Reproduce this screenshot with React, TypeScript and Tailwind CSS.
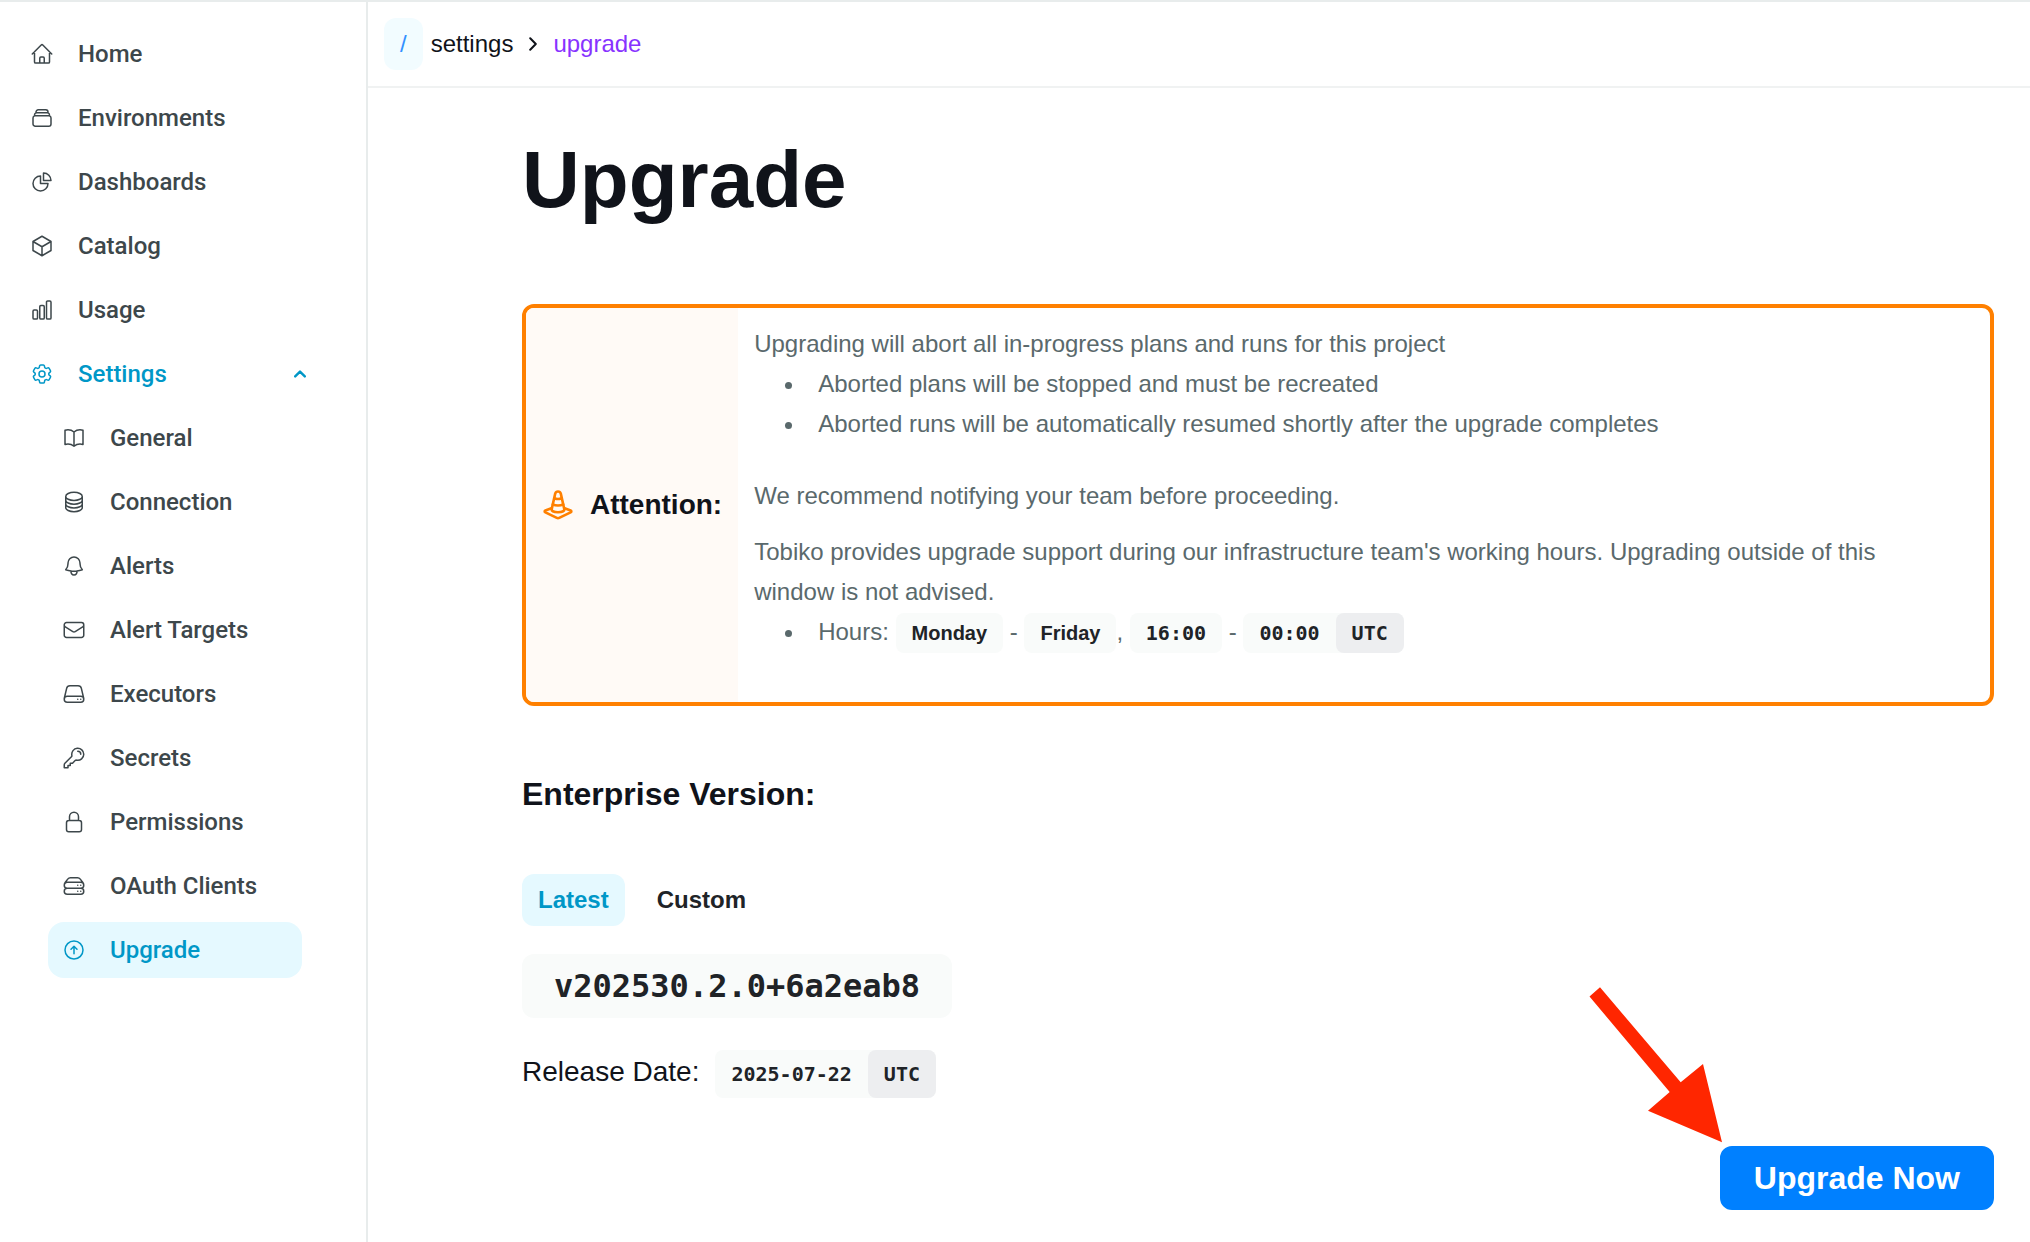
import { useState } from "react";
import type { ReactNode } from "react";
import type { IconType } from "react-icons";
import {
  HiOutlineArrowUpCircle,
  HiOutlineBell,
  HiOutlineBookOpen,
  HiOutlineChartBar,
  HiOutlineChartPie,
  HiOutlineCircleStack,
  HiOutlineCog6Tooth,
  HiOutlineCube,
  HiOutlineEnvelope,
  HiOutlineHome,
  HiOutlineKey,
  HiOutlineLockClosed,
  HiOutlineRectangleStack,
  HiOutlineServer,
  HiOutlineServerStack,
} from "react-icons/hi2";
import clsx from "clsx";

type NavEntry = { label: string; icon: IconType; active?: boolean };

const mainEntries: NavEntry[] = [
  { label: "Home", icon: HiOutlineHome },
  { label: "Environments", icon: HiOutlineRectangleStack },
  { label: "Dashboards", icon: HiOutlineChartPie },
  { label: "Catalog", icon: HiOutlineCube },
  { label: "Usage", icon: HiOutlineChartBar },
];

const settingsEntries: NavEntry[] = [
  { label: "General", icon: HiOutlineBookOpen },
  { label: "Connection", icon: HiOutlineCircleStack },
  { label: "Alerts", icon: HiOutlineBell },
  { label: "Alert Targets", icon: HiOutlineEnvelope },
  { label: "Executors", icon: HiOutlineServer },
  { label: "Secrets", icon: HiOutlineKey },
  { label: "Permissions", icon: HiOutlineLockClosed },
  { label: "OAuth Clients", icon: HiOutlineServerStack },
  { label: "Upgrade", icon: HiOutlineArrowUpCircle, active: true },
];

function NavIcon({ icon: Icon }: { icon: IconType }) {
  return (
    <span className="flex w-7 shrink-0 justify-center">
      <Icon className="size-6" strokeWidth={1.5} aria-hidden="true" />
    </span>
  );
}

function NavLink({ label, icon, active }: NavEntry) {
  return (
    <li>
      <a
        href="#"
        aria-current={active ? "page" : undefined}
        className={clsx(
          "flex h-14 items-center gap-[22px] rounded-2xl px-3",
          active ? "bg-[#e5f9ff] text-[#0097c7]" : "text-[#3d474b]",
        )}
      >
        <NavIcon icon={icon} />
        {label}
      </a>
    </li>
  );
}

function Sidebar() {
  const [open, setOpen] = useState(true);
  return (
    <nav
      aria-label="Main"
      className="w-[368px] shrink-0 border-r-2 border-[#e8ecec] py-6 pr-12 pl-4 font-[Roboto,sans-serif] text-2xl font-medium"
    >
      <ul className="flex flex-col gap-2">
        {mainEntries.map((entry) => (
          <NavLink key={entry.label} {...entry} />
        ))}
        <li>
          <button
            type="button"
            aria-expanded={open}
            onClick={() => setOpen(!open)}
            className="flex h-14 w-full items-center gap-[22px] rounded-2xl px-3 text-[#0097c7]"
          >
            <NavIcon icon={HiOutlineCog6Tooth} />
            Settings
            <svg
              viewBox="0 0 12 8"
              className={clsx("ml-auto h-2 w-3", !open && "rotate-180")}
              fill="none"
              stroke="currentColor"
              strokeWidth="2.4"
              strokeLinecap="round"
              strokeLinejoin="round"
              aria-hidden="true"
            >
              <path d="M1.2 6.4 6 1.6l4.8 4.8" />
            </svg>
          </button>
          {open && (
            <ul className="mt-2 mr-4 ml-8 flex flex-col gap-2">
              {settingsEntries.map((entry) => (
                <NavLink key={entry.label} {...entry} />
              ))}
            </ul>
          )}
        </li>
      </ul>
    </nav>
  );
}

function Breadcrumbs() {
  return (
    <header className="flex h-[86px] items-center border-b-2 border-[#f0f2f2] px-4 text-2xl text-[#10131a]">
      <a href="#" className="flex h-[52px] items-center rounded-xl bg-[#f2fcff] px-4 text-[#3391ff]">
        /
      </a>
      <a href="#" className="ml-2">
        settings
      </a>
      <svg
        viewBox="0 0 8 14"
        className="mx-4 h-3.5 w-2"
        fill="none"
        stroke="currentColor"
        strokeWidth="2"
        strokeLinecap="round"
        strokeLinejoin="round"
        aria-hidden="true"
      >
        <path d="m1.2 1.2 5.6 5.8-5.6 5.8" />
      </svg>
      <a href="#" className="text-[#8833ff]" aria-current="page">
        upgrade
      </a>
    </header>
  );
}

function TrafficCone() {
  return (
    <svg
      viewBox="0 0 32 32"
      className="size-8 shrink-0 text-[#ff8000]"
      fill="none"
      stroke="currentColor"
      strokeWidth="2.6"
      strokeLinecap="round"
      strokeLinejoin="round"
      aria-hidden="true"
    >
      <path d="M9.600 20.600 13.200 4.600a2.900 2.900 0 0 1 5.600 0l3.600 16c0 1.600-2.800 2.700-6.400 2.700s-6.400-1.100-6.400-2.700Z" />
      <path d="M12.400 9.200c2 .9 5.200.9 7.200 0M10.800 15.400c2.800 1.500 7.600 1.500 10.400 0" />
      <path d="m9.400 19.200-6 2.300c-1 .4-1 1.400 0 1.900l11.400 5.500c.8.4 1.600.4 2.400 0l11.400-5.500c1-.5 1-1.500 0-1.900l-6-2.300" />
    </svg>
  );
}

type TagProps = { children: ReactNode; mono?: boolean; suffix?: string; tall?: boolean };

function Tag({ children, mono, suffix, tall }: TagProps) {
  return (
    <span
      className={clsx(
        "inline-flex items-center rounded-lg bg-[#f9fbfa] text-xl font-bold text-[#202327]",
        tall ? "h-12" : "h-10",
        mono && "font-['DejaVu_Sans_Mono',monospace]",
      )}
    >
      <span className="px-4">{children}</span>
      {suffix && (
        <span className="flex h-full items-center rounded-lg bg-[#edeef0] px-4">{suffix}</span>
      )}
    </span>
  );
}

function AttentionNotice() {
  return (
    <section
      aria-label="Attention"
      className="mt-[84px] flex overflow-hidden rounded-xl border-4 border-[#ff8000]"
    >
      <div className="flex shrink-0 items-center gap-4 bg-[#fffaf6] px-4">
        <TrafficCone />
        <h2 className="text-[28px] font-bold">Attention:</h2>
      </div>
      <div className="pt-4 pr-12 pb-[49px] pl-4 text-2xl leading-10 text-[#5a696c]">
        <p>Upgrading will abort all in-progress plans and runs for this project</p>
        <ul className="mb-8 list-disc pl-13">
          <li className="pl-3">Aborted plans will be stopped and must be recreated</li>
          <li className="pl-3">
            Aborted runs will be automatically resumed shortly after the upgrade completes
          </li>
        </ul>
        <p className="mb-4">We recommend notifying your team before proceeding.</p>
        <p>
          Tobiko provides upgrade support during our infrastructure team's working hours. Upgrading
          outside of this window is not advised.
        </p>
        <ul className="list-disc pl-13">
          <li className="pl-3">
            Hours: <Tag>Monday</Tag> - <Tag>Friday</Tag>, <Tag mono>16:00</Tag> -{" "}
            <Tag mono suffix="UTC">
              00:00
            </Tag>
          </li>
        </ul>
      </div>
    </section>
  );
}

function VersionTabs() {
  const [selected, setSelected] = useState("Latest");
  return (
    <div role="tablist" aria-label="Enterprise Version" className="mt-[60px] flex gap-4">
      {["Latest", "Custom"].map((name) => (
        <button
          key={name}
          type="button"
          role="tab"
          aria-selected={selected === name}
          onClick={() => setSelected(name)}
          className={clsx(
            "h-[52px] rounded-xl px-4 text-2xl font-bold",
            selected === name ? "bg-[#e5f9ff] text-[#0097c7]" : "text-[#202327]",
          )}
        >
          {name}
        </button>
      ))}
    </div>
  );
}

function PointerArrow() {
  return (
    <svg
      viewBox="0 0 136 158"
      className="pointer-events-none absolute -top-40 -left-33 h-[158px] w-[136px]"
      aria-hidden="true"
    >
      <path
        fill="#ff2600"
        d="M1.500 10.500 12 1.300l80.700 95L115 78l19 78.300-74-31.600L81.700 106Z"
      />
    </svg>
  );
}

export default function App() {
  return (
    <div className="flex min-h-screen border-t-2 border-[#e8ecec] bg-white font-['Liberation_Sans',Arial,sans-serif] text-[#10131a]">
      <Sidebar />
      <div className="min-w-0 flex-1">
        <Breadcrumbs />
        <main className="pt-[52px] pr-9 pb-8 pl-[154px]">
          <h1 className="text-[80px] leading-none font-bold">Upgrade</h1>
          <AttentionNotice />
          <h2 className="mt-[68px] text-[32px] leading-10 font-bold">Enterprise Version:</h2>
          <VersionTabs />
          <div className="mt-7 flex h-16 w-fit items-center rounded-xl bg-[#f9fbfa] px-8 font-['DejaVu_Sans_Mono',monospace] text-[32px] font-bold text-[#202327]">
            v202530.2.0+6a2eab8
          </div>
          <div className="mt-8 flex items-baseline gap-4 text-[28px] leading-8">
            Release Date:
            <Tag mono tall suffix="UTC">
              2025-07-22
            </Tag>
          </div>
          <div className="mt-12 flex justify-end">
            <div className="relative">
              <button
                type="button"
                className="h-16 rounded-xl border-2 border-[#0080ff] bg-[#0080ff] px-8 text-[32px] leading-10 font-bold text-white"
              >
                Upgrade Now
              </button>
              <PointerArrow />
            </div>
          </div>
        </main>
      </div>
    </div>
  );
}
